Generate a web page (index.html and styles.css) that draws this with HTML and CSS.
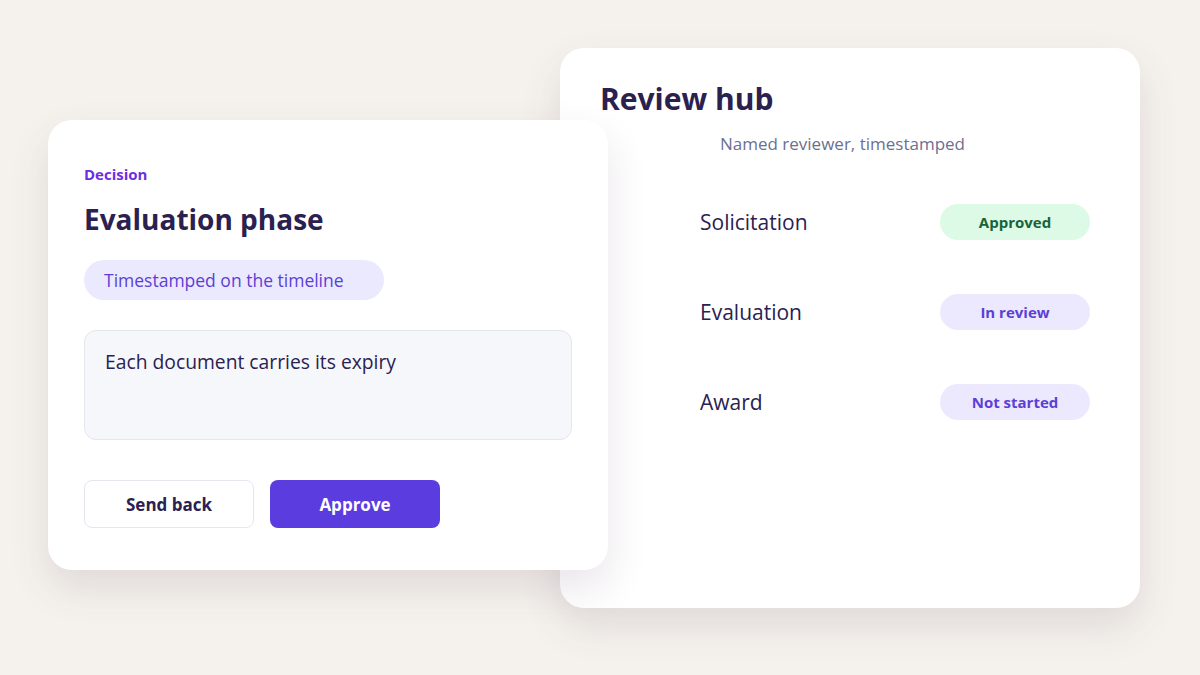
FILE: index.html
```html
<!DOCTYPE html>
<html lang="en">
<head>
    <meta charset="UTF-8">
    <meta name="viewport" content="width=device-width, initial-scale=1.0">
    <title>Review hub</title>
    <link rel="stylesheet" href="styles.css">
</head>
<body>
    <div class="stage">
        <div class="card hub">
            <h1>Review hub</h1>
            <p class="hub-note">Named reviewer, timestamped</p>
            <div class="phase-list">
                <div class="phase">
                    <span class="phase-name">Solicitation</span>
                    <span class="badge badge-ok">Approved</span>
                </div>
                <div class="phase">
                    <span class="phase-name">Evaluation</span>
                    <span class="badge">In review</span>
                </div>
                <div class="phase">
                    <span class="phase-name">Award</span>
                    <span class="badge">Not started</span>
                </div>
            </div>
        </div>

        <div class="card decision">
            <div class="eyebrow">Decision</div>
            <h2>Evaluation phase</h2>
            <div class="pill">Timestamped on the timeline</div>
            <div class="note-box">Each document carries its expiry</div>
            <div class="actions">
                <button class="btn btn-ghost">Send back</button>
                <button class="btn btn-primary">Approve</button>
            </div>
        </div>
    </div>
</body>
</html>
```

FILE: styles.css
```css
body {
    margin: 0;
    background-color: #f5f2ed;
    font-family: 'Open Sans', 'Noto Sans', sans-serif;
    color: #2a2150;
}
.stage {
    position: relative;
    width: 1200px;
    height: 675px;
    overflow: hidden;
}
.card {
    position: absolute; /* overlapping windows */
    background-color: #fff;
    border-radius: 24px;
    box-shadow: 0 18px 40px rgba(70, 40, 70, 0.12);
    box-sizing: border-box;
}

/* back card */
.hub {
    left: 560px;
    top: 48px;
    width: 580px;
    height: 560px;
    padding: 30px 50px 0 40px;
}
.hub h1 {
    margin: 0;
    font-size: 30px;
    font-weight: 700;
    line-height: 42px;
}
.hub-note {
    margin: 12px 0 0 120px;
    font-size: 17px;
    line-height: 24px;
    color: #6b7090;
}
.phase-list {
    margin: 48px 0 0 100px;
    display: flex;
    flex-direction: column;
    gap: 54px;
}
.phase {
    display: flex;
    align-items: center;
    justify-content: space-between;
}
.phase-name {
    font-size: 21px;
    font-weight: 500;
}
.badge {
    width: 150px;
    height: 36px;
    border-radius: 18px;
    display: flex;
    align-items: center;
    justify-content: center;
    font-size: 15px;
    font-weight: 700;
    background-color: #ece9fe;
    color: #5b3fd6;
}
.badge-ok {
    background-color: #dcfae6;
    color: #17633a;
}

/* front card */
.decision {
    left: 48px;
    top: 120px;
    width: 560px;
    height: 450px;
    padding: 44px 36px 0 36px;
}
.eyebrow {
    font-size: 15px;
    font-weight: 700;
    line-height: 20px;
    color: #6d2ee0;
}
.decision h2 {
    margin: 17px 0 0 0;
    font-size: 28px;
    font-weight: 700;
    line-height: 36px;
}
.pill {
    display: inline-flex;
    align-items: center;
    margin-top: 23px;
    height: 40px;
    width: 300px;
    box-sizing: border-box;
    padding: 0 20px;
    border-radius: 20px;
    background-color: #ebe9fd;
    color: #5b3fd6;
    font-size: 17.5px;
}
.note-box {
    margin-top: 30px;
    height: 110px;
    box-sizing: border-box;
    padding: 18px 20px;
    border: 1px solid #e6e6ee;
    border-radius: 12px;
    background-color: #f6f7fb;
    font-size: 19.3px;
    line-height: 26px;
}
.actions {
    margin-top: 40px;
    display: flex;
    gap: 16px;
}
.btn {
    width: 170px;
    height: 48px;
    border-radius: 8px;
    font-family: inherit;
    font-size: 17px;
    font-weight: 700;
    cursor: pointer;
}
.btn-ghost {
    background-color: #fff;
    border: 1px solid #e6e6ee;
    color: #2a2150;
}
.btn-primary {
    background-color: #5b3cdf;
    border: none;
    color: #fff;
}
```
